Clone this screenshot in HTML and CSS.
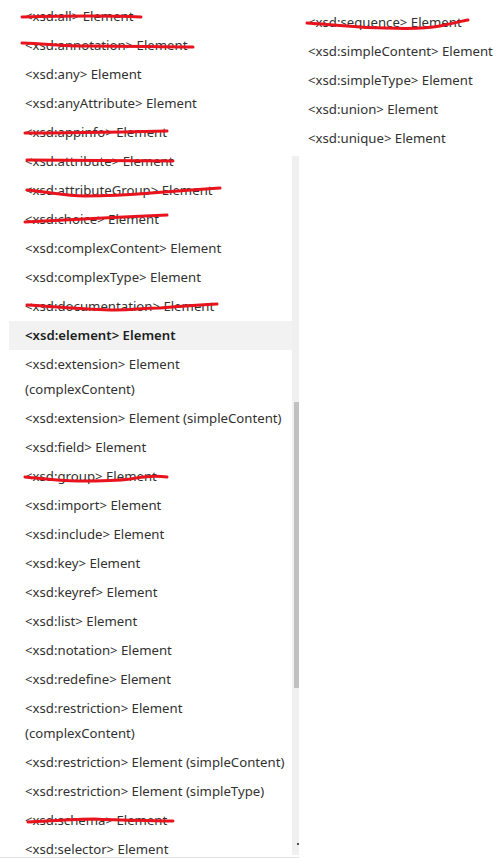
FILE: index.html
```html
<!DOCTYPE html>
<html>
<head>
<meta charset="utf-8">
<link rel="stylesheet" href="styles.css">
</head>
<body>
<div class="page">
  <div class="pane">
    <ul class="toc">
      <li>&lt;xsd:all&gt; Element</li>
      <li>&lt;xsd:annotation&gt; Element</li>
      <li>&lt;xsd:any&gt; Element</li>
      <li>&lt;xsd:anyAttribute&gt; Element</li>
      <li>&lt;xsd:appinfo&gt; Element</li>
      <li>&lt;xsd:attribute&gt; Element</li>
      <li>&lt;xsd:attributeGroup&gt; Element</li>
      <li>&lt;xsd:choice&gt; Element</li>
      <li>&lt;xsd:complexContent&gt; Element</li>
      <li>&lt;xsd:complexType&gt; Element</li>
      <li>&lt;xsd:documentation&gt; Element</li>
      <li class="active">&lt;xsd:element&gt; Element</li>
      <li>&lt;xsd:extension&gt; Element (complexContent)</li>
      <li>&lt;xsd:extension&gt; Element (simpleContent)</li>
      <li>&lt;xsd:field&gt; Element</li>
      <li>&lt;xsd:group&gt; Element</li>
      <li>&lt;xsd:import&gt; Element</li>
      <li>&lt;xsd:include&gt; Element</li>
      <li>&lt;xsd:key&gt; Element</li>
      <li>&lt;xsd:keyref&gt; Element</li>
      <li>&lt;xsd:list&gt; Element</li>
      <li>&lt;xsd:notation&gt; Element</li>
      <li>&lt;xsd:redefine&gt; Element</li>
      <li>&lt;xsd:restriction&gt; Element (complexContent)</li>
      <li>&lt;xsd:restriction&gt; Element (simpleContent)</li>
      <li>&lt;xsd:restriction&gt; Element (simpleType)</li>
      <li>&lt;xsd:schema&gt; Element</li>
      <li>&lt;xsd:selector&gt; Element</li>
    </ul>
    <div class="scrollbar">
      <div class="track">
        <div class="thumb"></div>
        <div class="arrow"></div>
      </div>
    </div>
  </div>
  <ul class="toc toc-right">
    <li>&lt;xsd:sequence&gt; Element</li>
    <li>&lt;xsd:simpleContent&gt; Element</li>
    <li>&lt;xsd:simpleType&gt; Element</li>
    <li>&lt;xsd:union&gt; Element</li>
    <li>&lt;xsd:unique&gt; Element</li>
  </ul>
  <svg class="marks" width="502" height="858" viewBox="0 0 502 858">
    <g fill="none" stroke="#e8131d" stroke-width="3" stroke-linecap="round" stroke-linejoin="round">
      <path d="M22 17 C60 16 100 15 141 17"/>
      <path d="M22 43 C50 44 60 46 90 46 C130 46 160 47 193 47"/>
      <path d="M25 133 C70 133 120 132 167 131"/>
      <path d="M27 160 C80 160 130 161 173 161"/>
      <path d="M27 190 C50 192 65 196 85 196 C120 196 150 193 165 192 C190 190 205 189 220 188"/>
      <path d="M25 222 C70 220 120 217 167 215"/>
      <path d="M27 305 C60 307 90 310 115 310 C135 310 140 308 160 308 C185 306 200 305 217 304"/>
      <path d="M25 477 C45 479 60 481 78 481 C100 481 115 481 130 479 C145 476 155 475 167 477"/>
      <path d="M28 822 C50 821 75 819 95 819 C110 820 120 820 173 821"/>
      <path d="M307 23 C340 25 360 28 385 28 C410 29 425 29 440 26 C455 23 462 21 468 20"/>
    </g>
  </svg>
</div>
</body>
</html>
```

FILE: styles.css
```css
html, body {
  margin: 0;
  padding: 0;
  background: #ffffff;
}

.page {
  position: relative;
  display: flex;
  width: 502px;
  height: 858px;
  overflow: hidden;
  font-family: "Noto Sans", "Segoe UI", sans-serif;
  font-size: 13.2px;
  color: #323130;
}

.pane {
  display: flex;
  width: 299px;
  height: 857px;
  border-bottom: 1px solid #e0e0e0;
  overflow: hidden;
  flex-shrink: 0;
}

.toc {
  list-style: none;
  margin: 0;
  padding: 0;
}

.pane .toc {
  width: 283px;
  margin: 2px 0 0 9px;
  flex-shrink: 0;
}

.toc li {
  padding: 2px 4px 2px 16px;
  line-height: 25px;
}

.toc li.active {
  background: #f2f2f2;
  font-weight: 600;
  color: #201f1e;
}

.scrollbar {
  width: 7px;
  padding-top: 156px;
  flex-shrink: 0;
}

.track {
  position: relative;
  height: 699px;
  background: #f0f0f0;
  padding-top: 246px;
  box-sizing: border-box;
}

.thumb {
  margin-left: 2px;
  height: 286px;
  background: #c1c1c1;
}

.arrow {
  position: absolute;
  left: 5px;
  bottom: 10px;
  width: 2px;
  height: 2px;
  background: #505050;
}

.toc-right {
  margin-top: 8px;
  padding-left: 9px;
}

.toc-right li {
  padding: 2px 0;
}

.marks {
  position: absolute;
  left: 0;
  top: 0;
  pointer-events: none;
}
```
